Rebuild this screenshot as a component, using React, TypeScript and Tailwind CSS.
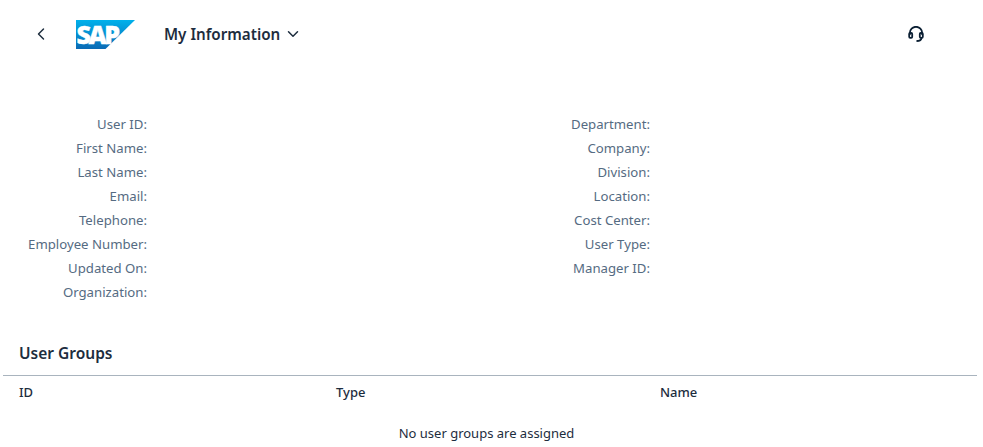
import { ChevronDown, ChevronLeft } from "lucide-react";

const leftFields = [
  "User ID:",
  "First Name:",
  "Last Name:",
  "Email:",
  "Telephone:",
  "Employee Number:",
  "Updated On:",
  "Organization:",
];

const rightFields = [
  "Department:",
  "Company:",
  "Division:",
  "Location:",
  "Cost Center:",
  "User Type:",
  "Manager ID:",
];

function SapLogo() {
  return (
    <svg width="59" height="29" viewBox="0 0 59 29" className="block overflow-visible">
      <defs>
        <linearGradient id="sapBlue" x1="0" y1="0" x2="0" y2="1">
          <stop offset="0" stopColor="#00b1eb" />
          <stop offset="1" stopColor="#0a6ab5" />
        </linearGradient>
      </defs>
      <polygon points="0,0 59,0 29.5,29 0,29" fill="url(#sapBlue)" />
      <text
        x="0.5"
        y="24"
        fill="#fff"
        stroke="#fff"
        strokeWidth="0.4"
        fontFamily="'Open Sans', sans-serif"
        fontWeight="800"
        fontSize="25"
        letterSpacing="-2.4"
      >
        SAP
      </text>
    </svg>
  );
}

function HeadsetIcon() {
  return (
    <svg width="16" height="16" viewBox="0 0 16 16" fill="none" stroke="#0b1f33" strokeWidth="1.8">
      <path d="M1.8 9V7a6.2 6.2 0 0 1 12.4 0v2" />
      <rect x="1.2" y="7" width="3" height="4.8" rx="1" />
      <rect x="11.8" y="7" width="3" height="4.8" rx="1" />
      <path d="M13.4 12c0 2-1.8 3-4.9 3" />
    </svg>
  );
}

function FieldColumn({ fields, width }: { fields: string[]; width: string }) {
  return (
    <div className={`flex flex-col ${width}`}>
      {fields.map((label) => (
        <div key={label} className="h-6 text-right text-[13.2px] leading-6 text-[#556b82]">
          {label}
        </div>
      ))}
    </div>
  );
}

export default function App() {
  return (
    <div className="h-[447px] w-[983px] overflow-hidden bg-white font-['Noto_Sans',sans-serif] text-[#1d2d3e]">
      {/* Header */}
      <header className="flex h-[68px] items-center pl-[31px] pr-[59px]">
        <ChevronLeft size={20} strokeWidth={1.75} className="text-[#1d2d3e]" />
        <div className="ml-[25px]">
          <SapLogo />
        </div>
        <h1 className="ml-[29px] text-[15.2px] font-semibold">My Information</h1>
        <ChevronDown size={18} strokeWidth={2} className="ml-[4px]" />
        <div className="ml-auto">
          <HeadsetIcon />
        </div>
      </header>

      {/* Details */}
      <section className="mt-11 flex h-[192px]">
        <FieldColumn fields={leftFields} width="w-[147px]" />
        <FieldColumn fields={rightFields} width="ml-[356px] w-[147px]" />
      </section>

      {/* User groups */}
      <section className="mt-[37px]">
        <h2 className="pl-[19px] text-[15.5px] leading-6 font-semibold">User Groups</h2>
        <div className="mt-[10px] ml-[3px] w-[974px] border-t border-[#a9b4be]">
          <div className="grid h-[34px] grid-cols-[317px_324px_1fr] items-center pl-4 text-[13px] font-medium">
            <span>ID</span>
            <span>Type</span>
            <span>Name</span>
          </div>
          <p className="mt-[14px] pr-[7px] text-center text-[13px] text-[#1d2d3e]">No user groups are assigned</p>
        </div>
      </section>
    </div>
  );
}
